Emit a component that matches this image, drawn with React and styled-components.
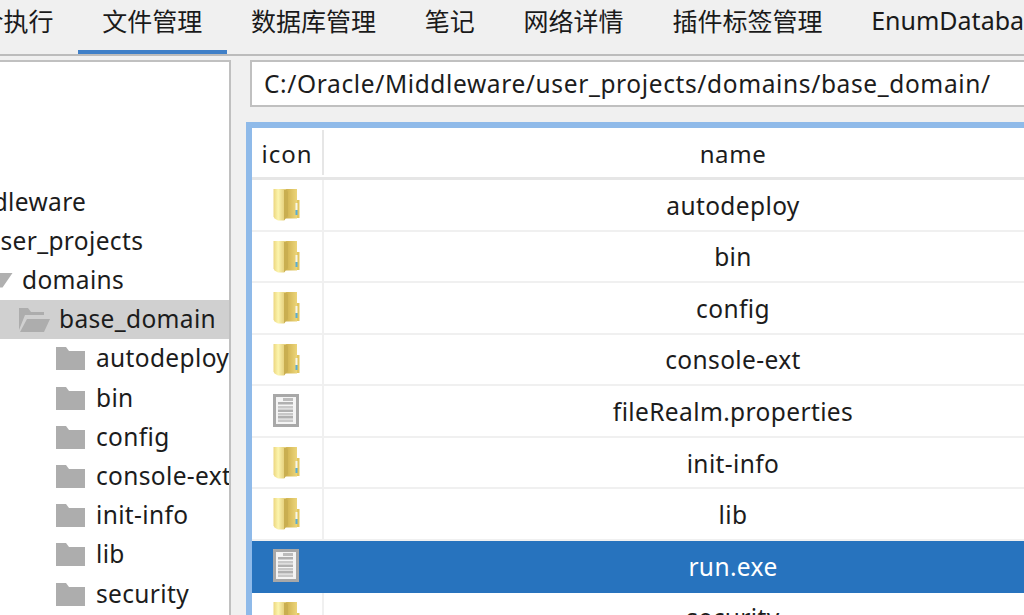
import React from "react";
import styled, { createGlobalStyle } from "styled-components";

const Global = createGlobalStyle`
  html, body { margin: 0; padding: 0; height: 100%; overflow: hidden; background: #f0f0f0; }
  * { box-sizing: border-box; }
  body { font-family: "Noto Sans", "Noto Sans CJK SC", sans-serif; color: #111; }
`;

const Page = styled.div`
  width: 1024px; height: 615px; overflow: hidden; display: flex; flex-direction: column; background: #f0f0f0;
`;
const TabBar = styled.div`
  height: 56px; flex: none; display: flex; border-bottom: 2px solid #bcbcbc; overflow: hidden;
`;
const TabStrip = styled.div`
  display: flex; margin-left: -71px; height: 56px; flex: none;
`;
const Tab = styled.div`
  height: 56px; padding: 0 24.4px 11px; display: flex; align-items: center; white-space: nowrap; flex: none;
  font-size: 25px; color: #1a1a1a;
  border-bottom: 6px solid ${p => (p.$active ? "#4080c8" : "transparent")};
`;
const Body = styled.div`
  flex: 1; min-height: 0; display: flex; padding-top: 4px;
`;
const Tree = styled.div`
  width: 231px; flex: none; background: #fff; border-top: 2px solid #c0c0c0; border-right: 2px solid #c0c0c0;
  padding-top: 120.6px; overflow: hidden;
`;
const TreeRow = styled.div`
  height: 39.2px; display: flex; align-items: center; white-space: nowrap;
  font-size: 24.5px; letter-spacing: 0.35px; color: #1c1c1c; padding-bottom: 2px;
  background: ${p => (p.$selected ? "#d0d0d0" : "transparent")};
`;
const TreeLabel = styled.span`
  flex: none; margin-left: ${p => p.$indent}px;
`;
const TreeIconSlot = styled.span`
  flex: none; width: 0; display: flex; align-items: center; padding-top: 2px;
  transform: translateX(${p => p.$x}px);
  svg { flex: none; display: block; }
`;
const Right = styled.div`
  flex: 1; min-width: 0; display: flex; flex-direction: column; overflow: hidden; padding-left: 15px;
`;
const PathInput = styled.div`
  flex: none; height: 47px; margin-left: 4px; width: 900px; background: #fff; border: 2px solid #c0c0c0; border-right: none;
  display: flex; align-items: center; padding-left: 12px; font-size: 24.5px; letter-spacing: 0.62px; white-space: nowrap; color: #1c1c1c;
`;
const Table = styled.div`
  flex: none; margin-top: 15px; width: 900px; background: #fff; border-top: 6px solid #8fbae9; border-left: 6px solid #8fbae9;
`;
const Header = styled.div`
  height: 52px; display: grid; grid-template-columns: 72px 818px; border-bottom: 3px solid #e6e6e6; padding-top: 2px;
`;
const HeaderCell = styled.div`
  height: 45px; display: flex; align-items: center; justify-content: center; font-size: 24px; color: #1c1c1c;
  letter-spacing: ${p => (p.$first ? "1px" : "0.6px")}; padding-top: 2px;
  ${p => p.$first && "border-right: 2px solid #e6e6e6;"}
`;
const Row = styled.div`
  height: 51.57px; display: grid; grid-template-columns: 72px 818px;
  background: ${p => (p.$selected ? "#2773be" : "#fff")};
  color: ${p => (p.$selected ? "#fff" : "#1c1c1c")};
  border-bottom: 2px solid ${p => (p.$selected ? "#2773be" : "#f0f0f0")};
`;
const IconCell = styled.div`
  padding: 8px 0 0 21px; display: flex; align-items: flex-start;
  border-right: 2px solid ${p => (p.$selected ? "#2773be" : "#f0f0f0")};
  svg { display: block; }
`;
const NameCell = styled.div`
  display: flex; align-items: center; justify-content: center; font-size: 24.5px; letter-spacing: 0.38px; padding-top: 1px; white-space: nowrap;
`;

const GrayFolder = () => (
  <svg width="29" height="23" viewBox="0 0 29 23">
    <path d="M0 0h10l3 4h16v19H0z" fill="#adadad" />
  </svg>
);
const OpenFolder = () => (
  <svg width="32" height="24" viewBox="0 0 32 24">
    <path d="M0 0h9l3 4h13v3H6L0 22z" fill="#adadad" />
    <path d="M8 11h23l-6 13H1z" fill="#adadad" />
  </svg>
);
const Triangle = () => (
  <svg width="13" height="15" viewBox="0 0 13 15">
    <path d="M0 0h12.500L2.500 14.500H0z" fill="#b0b0b0" />
  </svg>
);
const YellowFolder = () => (
  <svg width="27" height="33" viewBox="0 0 27 33">
    <defs>
      <linearGradient id="fl" x1="0" x2="1" y1="0" y2="0">
        <stop offset="0" stopColor="#ecd67e" />
        <stop offset=".35" stopColor="#fcf5ae" />
        <stop offset=".6" stopColor="#efdf92" />
        <stop offset="1" stopColor="#dcc368" />
      </linearGradient>
      <linearGradient id="fr" x1="0" x2="1" y1="0" y2="0">
        <stop offset="0" stopColor="#cfb14e" />
        <stop offset="1" stopColor="#ecd57a" />
      </linearGradient>
    </defs>
    <path d="M23 12h3.500v18H23z" fill="#e2c660" />
    <path d="M13 1h11v29.500H13z" fill="url(#fr)" />
    <path d="M0.500 1h12.500l1 2v25l-3 4.500H5l-3.500-2-1-2z" fill="url(#fl)" />
    <path d="M11 2h3l1 2v24l-4 4.500z" fill="#c9ae50" />
    <path d="M22.500 15h2v7h-2z" fill="#f6f6ea" />
    <path d="M22.500 22h2v5h-2z" fill="#58add6" />
  </svg>
);
const DocIcon = () => (
  <svg width="26" height="33" viewBox="0 0 26 33">
    <rect x="1.500" y="1.500" width="23" height="30" fill="#f4f4f4" stroke="#a8a8a8" strokeWidth="3" />
    <rect x="10" y="4" width="10" height="3" fill="#bcbcbc" />
    {[8, 12, 15.500, 19, 22, 25.500].map((y, i) => (
      <rect key={y} x="5" y={y} width="15" height="2.500" fill={i % 2 ? "#c8c8c8" : "#b0b0b0"} />
    ))}
  </svg>
);

const tabs = ["命令执行", "文件管理", "数据库管理", "笔记", "网络详情", "插件标签管理", "EnumDatabase"];
const treeRows = [
  { label: "Middleware", indent: -52 },
  { label: "user_projects", indent: -15 },
  { label: "domains", indent: 22, icon: <Triangle />, iconX: 0 },
  { label: "base_domain", indent: 59, icon: <OpenFolder />, iconX: 19 },
  ...["autodeploy", "bin", "config", "console-ext", "init-info", "lib", "security"].map(label => ({
    label, indent: 96, icon: <GrayFolder />, iconX: 56,
  })),
];
const files = [
  { name: "autodeploy" },
  { name: "bin" },
  { name: "config" },
  { name: "console-ext" },
  { name: "fileRealm.properties", doc: true },
  { name: "init-info" },
  { name: "lib" },
  { name: "run.exe", doc: true, selected: true },
  { name: "security" },
];

export default function App() {
  return (
    <Page>
      <Global />
      <TabBar>
        <TabStrip>
          {tabs.map(t => (
            <Tab key={t} $active={t === "文件管理"}>{t}</Tab>
          ))}
        </TabStrip>
      </TabBar>
      <Body>
        <Tree>
          {treeRows.map(r => (
            <TreeRow key={r.label} $selected={r.label === "base_domain"}>
              {r.icon && <TreeIconSlot $x={r.iconX}>{r.icon}</TreeIconSlot>}
              <TreeLabel $indent={r.indent}>{r.label}</TreeLabel>
            </TreeRow>
          ))}
        </Tree>
        <Right>
          <PathInput>C:/Oracle/Middleware/user_projects/domains/base_domain/</PathInput>
          <Table>
            <Header>
              <HeaderCell $first>icon</HeaderCell>
              <HeaderCell>name</HeaderCell>
            </Header>
            {files.map(f => (
              <Row key={f.name} $selected={f.selected}>
                <IconCell $selected={f.selected}>{f.doc ? <DocIcon /> : <YellowFolder />}</IconCell>
                <NameCell>{f.name}</NameCell>
              </Row>
            ))}
          </Table>
        </Right>
      </Body>
    </Page>
  );
}
